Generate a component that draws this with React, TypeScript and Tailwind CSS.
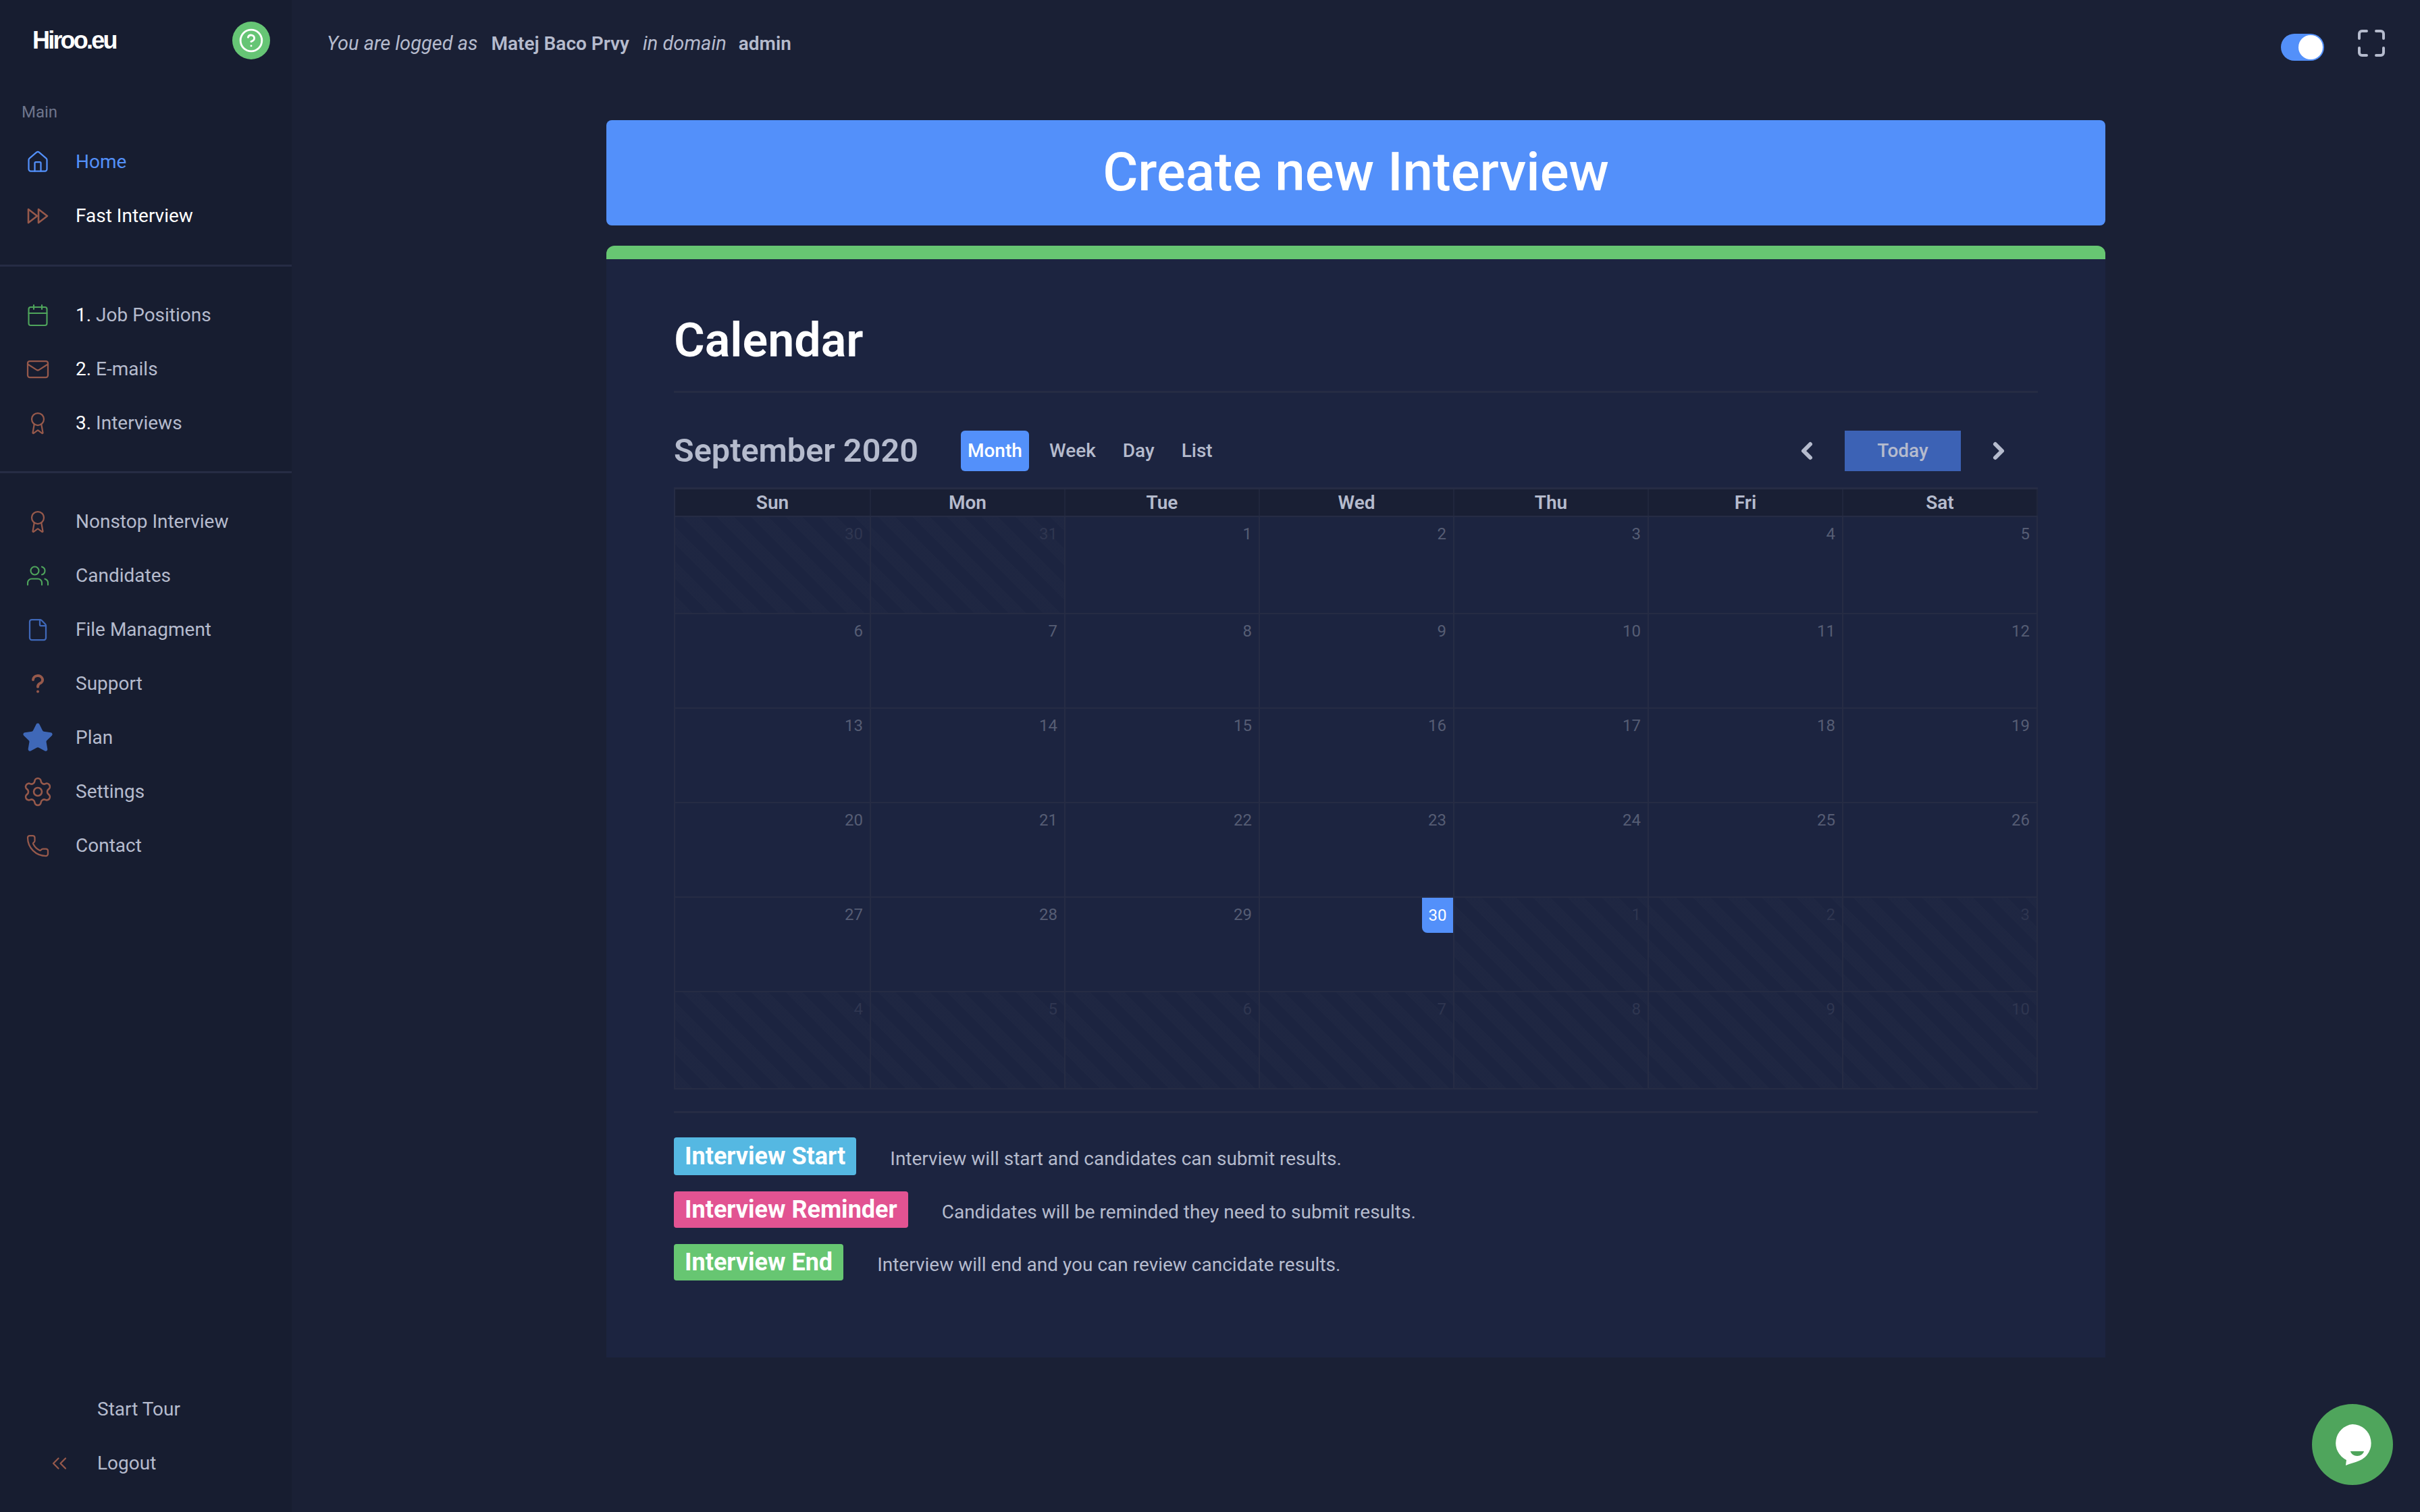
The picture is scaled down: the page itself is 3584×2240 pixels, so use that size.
import React from "react";
import {
  Award,
  Calendar,
  ChevronLeft,
  ChevronRight,
  ChevronsLeft,
  CircleHelp,
  File,
  House,
  Mail,
  Phone,
  Settings,
  Star,
  Users,
} from "lucide-react";

const BROWN = "text-[#96594b]";
const GREEN = "text-[#4fa55c]";
const BLUE = "text-[#3f68b8]";

const QuestionMark = () => (
  <svg width="18" height="28" viewBox="0 0 18 28" fill="none" stroke="currentColor" strokeWidth="4" strokeLinecap="round" className={BROWN}>
    <path d="M2 8a7 6 0 1 1 10 5.5c-2 1-3 2-3 5" />
    <path d="M9 25.5h.01" />
  </svg>
);

const FastIcon = () => (
  <svg width="32" height="24" viewBox="0 0 32 24" fill="none" stroke="currentColor" strokeWidth="2.6" strokeLinejoin="round" className={BROWN}>
    <polygon points="2,2 15,12 2,22" />
    <polygon points="17,2 30,12 17,22" />
  </svg>
);

const FullscreenIcon = () => (
  <svg width="40" height="40" viewBox="0 0 40 40" fill="none" stroke="#b5bbcd" strokeWidth="4" strokeLinecap="round">
    <path d="M2 13V6a4 4 0 0 1 4-4h7" />
    <path d="M27 2h7a4 4 0 0 1 4 4v7" />
    <path d="M38 27v7a4 4 0 0 1-4 4h-7" />
    <path d="M13 38H6a4 4 0 0 1-4-4v-7" />
  </svg>
);

const ChatIcon = () => (
  <svg width="120" height="120" viewBox="0 0 120 120">
    <circle cx="60" cy="60" r="60" fill="#4fa55c" />
    <path d="M60 30a28 28 0 0 1 10 54c-7 3-13 4-20 7l1-8a28 28 0 0 1 9-53z" fill="#fff" />
    <path d="M57 70h20c-1 4-5 7-10 7s-9-3-10-7z" fill="#4fa55c" />
  </svg>
);

const NavItem = ({ icon, children }: { icon: React.ReactNode; children: React.ReactNode }) => (
  <div className="flex h-[80px] items-center">
    <div className="flex w-[112px] shrink-0 justify-center">{icon}</div>
    <span className="text-[28px] text-[#b5bbcd]">{children}</span>
  </div>
);

const Sidebar = () => (
  <aside className="flex h-full w-[432px] shrink-0 flex-col bg-[#171d30]">
    <div className="flex h-[120px] items-center justify-between pl-[48px] pr-[32px]">
      <span className="font-['Liberation_Sans',sans-serif] text-[36px] font-bold tracking-[-2.8px] text-white">Hiroo.eu</span>
      <div className="flex h-[56px] w-[56px] items-center justify-center rounded-full bg-[#66c575]">
        <CircleHelp size={38} strokeWidth={1.8} className="text-white" />
      </div>
    </div>
    <div className="pl-[32px] pt-[29px] text-[24px] leading-[34px] text-[#6e758c]">Main</div>
    <div className="mt-[17px] border-b-[3px] border-[#262c44] pb-[32px]">
      <NavItem icon={<House size={36} strokeWidth={1.5} className="text-[#5390fa]" />}>
        <span className="text-[#5390fa]">Home</span>
      </NavItem>
      <NavItem icon={<FastIcon />}>
        <span className="text-white">Fast Interview</span>
      </NavItem>
    </div>
    <div className="border-b-[3px] border-[#262c44] pb-[31px] pt-[32px]">
      <NavItem icon={<Calendar size={36} strokeWidth={1.4} className={GREEN} />}>
        <span className="text-white">1.</span> Job Positions
      </NavItem>
      <NavItem icon={<Mail size={36} strokeWidth={1.5} className={BROWN} />}>
        <span className="text-white">2.</span> E-mails
      </NavItem>
      <NavItem icon={<Award size={36} strokeWidth={1.5} className={BROWN} />}>
        <span className="text-white">3.</span> Interviews
      </NavItem>
    </div>
    <div className="pt-[32px]">
      <NavItem icon={<Award size={36} strokeWidth={1.5} className={BROWN} />}>Nonstop Interview</NavItem>
      <NavItem icon={<Users size={36} strokeWidth={1.4} className={GREEN} />}>Candidates</NavItem>
      <NavItem icon={<File size={36} strokeWidth={1.5} className={BLUE} />}>File Managment</NavItem>
      <NavItem icon={<QuestionMark />}>Support</NavItem>
      <NavItem icon={<Star size={48} fill="currentColor" strokeWidth={1.6} className={BLUE} />}>Plan</NavItem>
      <NavItem icon={<Settings size={48} strokeWidth={1.3} className={BROWN} />}>Settings</NavItem>
      <NavItem icon={<Phone size={36} strokeWidth={1.5} className={BROWN} />}>Contact</NavItem>
    </div>
    <div className="mt-auto pb-[32px]">
      <div className="flex h-[80px] items-center pl-[144px] text-[28px] text-[#b5bbcd]">Start Tour</div>
      <div className="flex h-[80px] items-center text-[28px] text-[#b5bbcd]">
        <div className="w-[144px] pl-[70px]">
          <ChevronsLeft size={36} strokeWidth={1.5} className={BROWN} />
        </div>
        Logout
      </div>
    </div>
  </aside>
);

const TopBar = () => (
  <div className="flex h-[128px] items-center pl-[52px] pr-[52px] text-[28px] text-[#b5bbcd]">
    <i className="mr-[20px] pt-[1px] text-[29px]">You are logged as</i>
    <span className="mr-[20px] pt-[1px] font-semibold">Matej Baco Prvy</span>
    <i className="mr-[18px] pt-[1px] text-[29px]">in domain</i>
    <span className="pt-[1px] font-semibold">admin</span>
    <div className="ml-auto flex items-center gap-[50px]">
      <div className="mt-[12px] flex h-[40px] w-[64px] items-center justify-end rounded-full bg-[#5390fa] pr-[2px]">
        <div className="h-[36px] w-[36px] rounded-full bg-white" />
      </div>
      <FullscreenIcon />
    </div>
  </div>
);

const days = ["Sun", "Mon", "Tue", "Wed", "Thu", "Fri", "Sat"];
const cells = [30, 31, ...Array.from({ length: 30 }, (_, i) => i + 1), 1, 2, 3, 4, 5, 6, 7, 8, 9, 10];

const CalendarGrid = () => (
  <div className="border-b-[2px] border-l-[2px] border-[#262c44]">
    <div className="grid h-[42px] grid-cols-[290px_repeat(6,1fr)] border-t-[3px] border-[#262c44] bg-[#191f34]">
      {days.map((d) => (
        <div key={d} className="flex items-center justify-center border-r-[2px] border-[#20263c] text-[28px] font-semibold leading-none text-[#b5bbcd]">
          {d}
        </div>
      ))}
    </div>
    <div className="grid grid-cols-[290px_repeat(6,1fr)] grid-rows-[144px_140px_140px_140px_140px_144px]">
      {cells.map((n, i) => {
        const muted = i < 2 || i > 31;
        const today = i === 31;
        return (
          <div
            key={i}
            className={`flex items-start justify-end border-r-[2px] border-t-[2px] border-[#262c44] ${
              muted ? "bg-[repeating-linear-gradient(45deg,rgba(255,255,255,0.01)_0px,rgba(255,255,255,0.01)_18px,transparent_18px,transparent_36px)]" : ""
            }`}
          >
            {today ? (
              <span className="h-[52px] w-[46px] rounded-bl-[8px] bg-[#5390fa] text-center text-[24px] leading-[52px] text-white">{n}</span>
            ) : (
              <span className={`pr-[10px] text-[24px] leading-[50px] ${muted ? "text-[#2f3650]" : "text-[#565d74]"}`}>{n}</span>
            )}
          </div>
        );
      })}
    </div>
  </div>
);

const legend = [
  { label: "Interview Start", color: "bg-[#55b8e2]", height: "h-[56px]", text: "Interview will start and candidates can submit results." },
  { label: "Interview Reminder", color: "bg-[#e25392]", height: "h-[54px]", text: "Candidates will be reminded they need to submit results." },
  { label: "Interview End", color: "bg-[#67c672]", height: "h-[54px]", text: "Interview will end and you can review cancidate results." },
];

const App = () => {
  return (
    <div className="flex h-screen w-full overflow-hidden bg-[#1a2035] font-['Roboto',sans-serif]">
      <Sidebar />
      <main className="min-w-0 flex-1">
        <TopBar />
        <div className="mx-auto w-[2220px] pt-[50px]">
          <div className="flex h-[156px] items-center justify-center rounded-[8px] bg-[#5390fa] pb-[2px] text-[80px] font-medium text-white">
            Create new Interview
          </div>
          <div className="mt-[30px] h-[20px] rounded-t-[12px] bg-[#67c672]" />
          <div className="h-[1627px] bg-[#1c2440] px-[100px]">
            <div className="flex h-[198px] items-end border-b-[3px] border-[#262c44] pb-[27px]">
              <h1 className="text-[70px] font-semibold leading-[96px] text-white">Calendar</h1>
            </div>
            <div className="mt-[56px] flex h-[60px] items-center text-[28px] font-medium text-[#b5bbcd]">
              <h2 className="mr-[63px] text-[48.6px] font-semibold">September 2020</h2>
              <span className="flex h-[60px] w-[101px] items-center justify-center rounded-[6px] bg-[#5390fa] text-white">Month</span>
              <span className="ml-[30px]">Week</span>
              <span className="ml-[40px]">Day</span>
              <span className="ml-[40px]">List</span>
              <ChevronLeft size={40} strokeWidth={3.6} className="ml-auto" />
              <span className="ml-[36px] flex h-[60px] w-[172px] items-center justify-center bg-[#3c62b5]">Today</span>
              <ChevronRight size={40} strokeWidth={3.6} className="ml-[36px] mr-[38px]" />
            </div>
            <div className="mt-[24px]">
              <CalendarGrid />
            </div>
            <div className="mt-[32px] border-t-[3px] border-[#262c44] pt-[36px]">
              {legend.map((l) => (
                <div key={l.label} className="mb-[24px] flex items-center gap-[50px]">
                  <span className={`flex items-center rounded-[4px] px-[16px] text-[36px] font-bold text-white ${l.color} ${l.height}`}>{l.label}</span>
                  <span className="pt-[7px] text-[28px] text-[#b5bbcd]">{l.text}</span>
                </div>
              ))}
            </div>
          </div>
        </div>
      </main>
      <div className="fixed bottom-[40px] right-[40px]">
        <ChatIcon />
      </div>
    </div>
  );
};

export default App;
